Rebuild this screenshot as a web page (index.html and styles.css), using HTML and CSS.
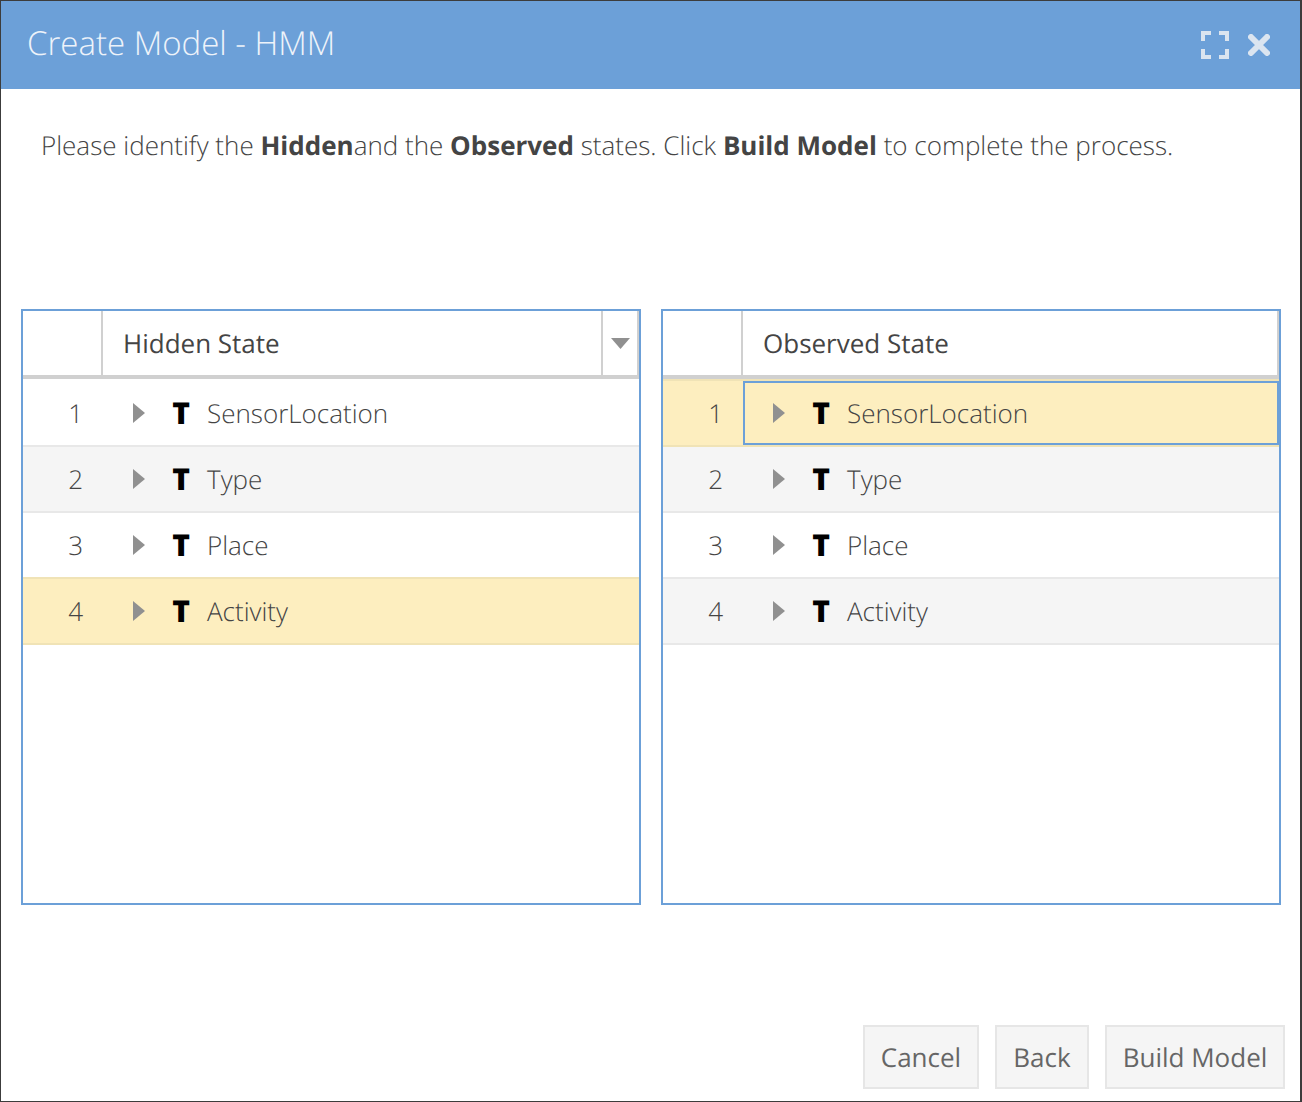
FILE: index.html
```html
<!DOCTYPE html>
<html lang="en">
<head>
    <meta charset="UTF-8">
    <title>Create Model - HMM</title>
    <link rel="stylesheet" href="styles.css">
</head>
<body>
    <div class="dialog">
        <header class="dialog-header">
            <h1>Create Model - HMM</h1>
            <div class="window-icons">
                <svg class="icon-max" width="28" height="28" viewBox="0 0 28 28">
                    <path d="M0 0h10v4H4v6H0zM18 0h10v10h-4V4h-6zM0 18h4v6h6v4H0zM24 18h4v10H18v-4h6z" fill="#dbe5f0"/>
                </svg>
                <svg class="icon-close" width="22" height="22" viewBox="0 0 22 22">
                    <path d="M3 3l16 16M19 3L3 19" stroke="#dbe5f0" stroke-width="6" stroke-linecap="round"/>
                </svg>
            </div>
        </header>

        <p class="message">Please identify the <b>Hidden</b>and the <b>Observed</b> states. Click <b>Build Model</b> to complete the process.</p>

        <div class="grids">
            <section class="grid">
                <div class="grid-head">
                    <div class="head-corner"></div>
                    <div class="head-title">Hidden State</div>
                    <div class="head-menu">
                        <svg width="19" height="11" viewBox="0 0 19 11"><path d="M0 0h19l-9.500 11z" fill="#909090"/></svg>
                    </div>
                </div>
                <div class="grid-body">
                    <div class="row">
                        <div class="row-num">1</div>
                        <div class="row-cell"><span class="arrow"></span><span class="type-t">T</span><span class="name">SensorLocation</span></div>
                    </div>
                    <div class="row alt">
                        <div class="row-num">2</div>
                        <div class="row-cell"><span class="arrow"></span><span class="type-t">T</span><span class="name">Type</span></div>
                    </div>
                    <div class="row">
                        <div class="row-num">3</div>
                        <div class="row-cell"><span class="arrow"></span><span class="type-t">T</span><span class="name">Place</span></div>
                    </div>
                    <div class="row selected">
                        <div class="row-num">4</div>
                        <div class="row-cell"><span class="arrow"></span><span class="type-t">T</span><span class="name">Activity</span></div>
                    </div>
                </div>
            </section>

            <section class="grid">
                <div class="grid-head">
                    <div class="head-corner"></div>
                    <div class="head-title">Observed State</div>
                </div>
                <div class="grid-body">
                    <div class="row selected">
                        <div class="row-num">1</div>
                        <div class="row-cell focused"><span class="arrow"></span><span class="type-t">T</span><span class="name">SensorLocation</span></div>
                    </div>
                    <div class="row alt">
                        <div class="row-num">2</div>
                        <div class="row-cell"><span class="arrow"></span><span class="type-t">T</span><span class="name">Type</span></div>
                    </div>
                    <div class="row">
                        <div class="row-num">3</div>
                        <div class="row-cell"><span class="arrow"></span><span class="type-t">T</span><span class="name">Place</span></div>
                    </div>
                    <div class="row alt">
                        <div class="row-num">4</div>
                        <div class="row-cell"><span class="arrow"></span><span class="type-t">T</span><span class="name">Activity</span></div>
                    </div>
                </div>
            </section>
        </div>

        <footer class="dialog-footer">
            <button class="cancel">Cancel</button>
            <button class="back">Back</button>
            <button class="build">Build Model</button>
        </footer>
    </div>
</body>
</html>
```

FILE: styles.css
```css
* {
    box-sizing: border-box;
}

body {
    margin: 0;
    background-color: #fff;
    font-family: "Open Sans", sans-serif;
    color: #444;
    text-rendering: geometricPrecision;
}

.dialog {
    width: 1302px;
    height: 1102px;
    border: 1px solid #3c3c3c;
    border-right-width: 2px;
    display: flex;
    flex-direction: column;
    overflow: hidden;
}

.dialog-header {
    height: 88px;
    flex: none;
    background-color: #6ca0d8;
    display: flex;
    align-items: center;
    justify-content: space-between;
    padding: 0 30px 0 26px;
}

.dialog-header h1 {
    margin: -6px 0 0;
    font-size: 33px;
    font-weight: 300;
    color: #eef3fa;
}

.window-icons {
    display: flex;
    align-items: center;
    gap: 19px;
}

.message {
    margin: 0;
    height: 220px;
    padding: 38px 0 0 40px;
    font-size: 26px;
    line-height: 36px;
    font-weight: 300;
}

.message b {
    font-weight: 700;
}

.grids {
    display: flex;
    gap: 20px;
    padding-left: 20px;
}

.grid {
    width: 620px;
    height: 596px;
    border: 2px solid #6ca0d8;
}

.grid-head {
    display: flex;
    height: 68px;
    border-bottom: 4px solid #d0d0d0;
    border-right: 2px solid #d0d0d0;
}

.head-corner {
    width: 80px;
    flex: none;
    border-right: 2px solid #d0d0d0;
}

.head-title {
    flex: 1;
    padding-left: 20px;
    font-size: 26px;
    line-height: 64px;
}

.head-menu {
    width: 36px;
    flex: none;
    border-left: 2px solid #d0d0d0;
    display: flex;
    align-items: center;
    justify-content: center;
    padding-left: 1px;
}

.grid-body {
    padding-top: 2px;
}

.row {
    display: flex;
    height: 66px;
    border-bottom: 2px solid #e8e8e8;
    font-size: 26px;
    font-weight: 300;
}

.row.alt {
    background-color: #f5f5f5;
}

.row.selected {
    background-color: #fdeebf;
    border-bottom-color: #f0e3b6;
    box-shadow: 0 -2px 0 #f0e3b6;
}

.row-num {
    width: 60px;
    margin-right: 20px;
    text-align: right;
    flex: none;
    line-height: 64px;
}

.row-cell {
    flex: 1;
    display: flex;
    align-items: center;
    padding-left: 28px;
    border: 2px solid transparent;
}

.row-cell.focused {
    border-color: #6ca0d8;
}

.arrow {
    width: 0;
    height: 0;
    border-left: 12px solid #909090;
    border-top: 10px solid transparent;
    border-bottom: 10px solid transparent;
}

.type-t {
    width: 18px;
    margin-left: 27px;
    font-size: 30px;
    font-weight: 800;
    color: #000;
    line-height: 1;
    text-align: center;
}

.name {
    margin-left: 17px;
}

.dialog-footer {
    margin-top: auto;
    display: flex;
    justify-content: flex-end;
    gap: 16px;
    padding: 0 15px 12px 0;
}

button {
    height: 64px;
    padding: 0;
    border: 2px solid #e6e6e6;
    background-color: #f5f5f5;
    font-family: "Open Sans", sans-serif;
    font-size: 26px;
    color: #666;
    text-rendering: geometricPrecision;
}

.cancel {
    width: 116px;
}

.back {
    width: 94px;
}

.build {
    width: 180px;
}
```
